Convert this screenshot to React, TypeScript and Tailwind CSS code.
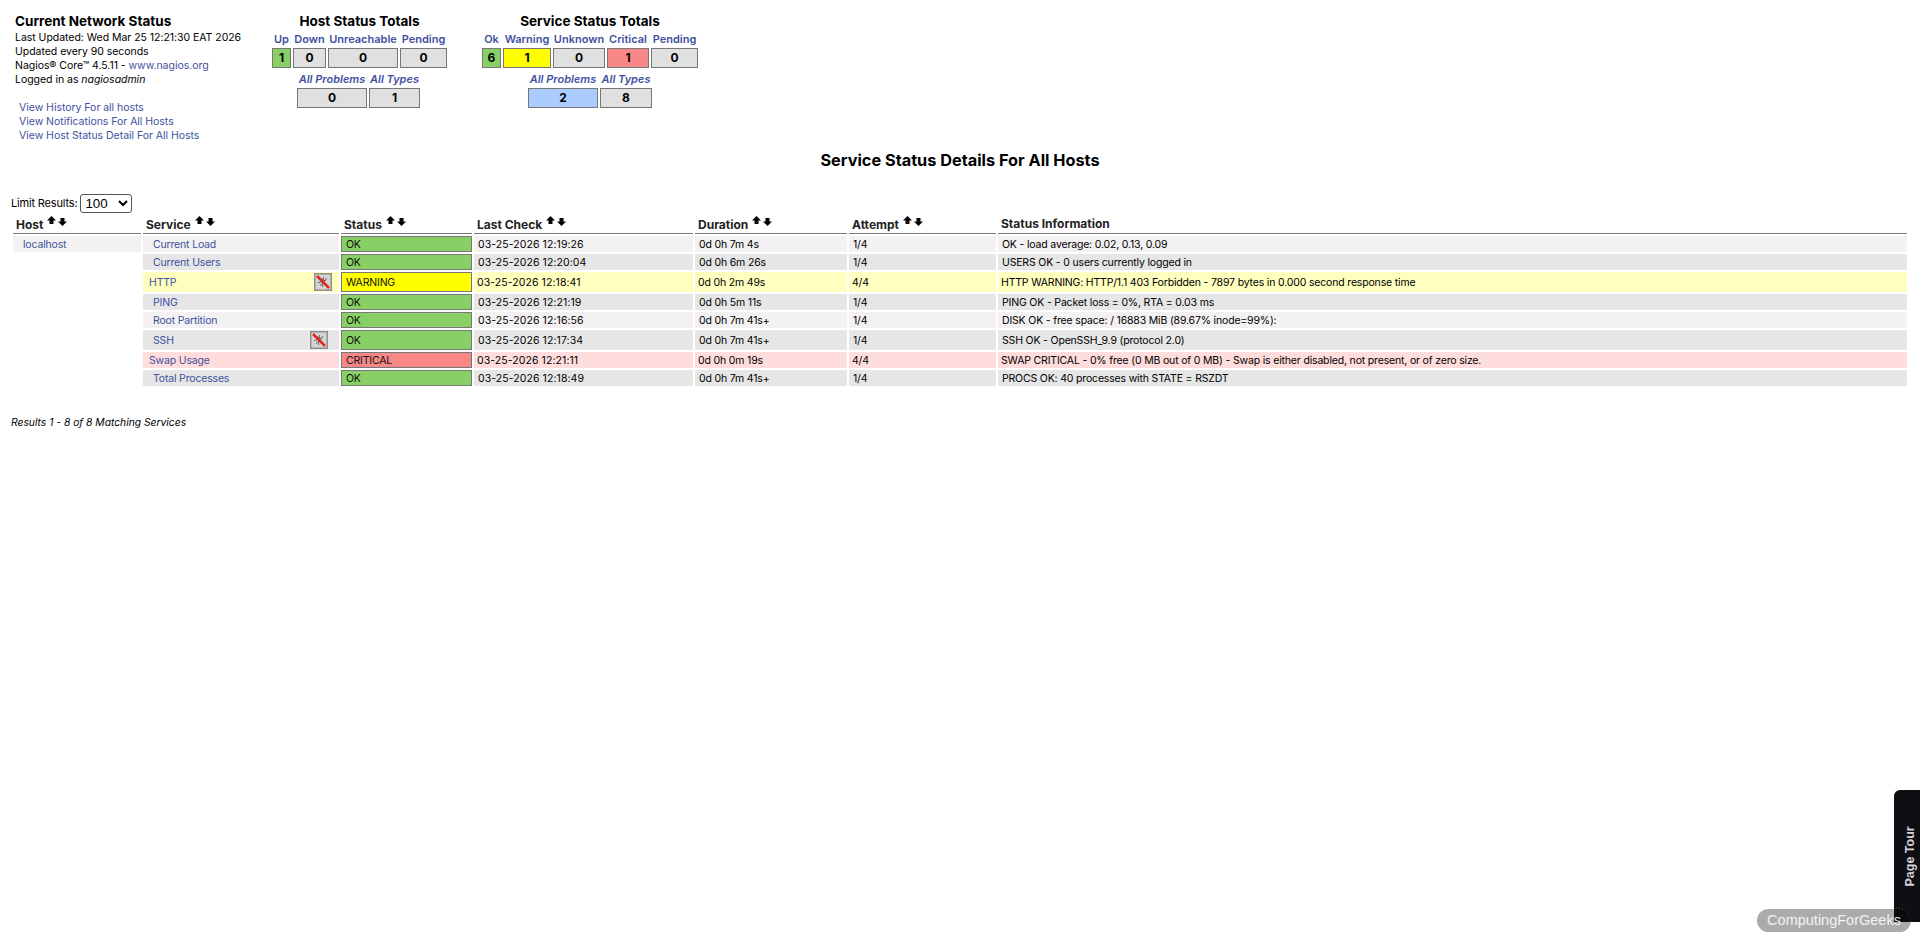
const link = "text-[#3f51a0]";

type Row = {
  service: string;
  status: "OK" | "WARNING" | "CRITICAL";
  check: string;
  duration: string;
  attempt: string;
  info: string;
  tall?: boolean;
  icon?: boolean;
  even?: boolean;
};

const rows: Row[] = [
  { service: "Current Load", status: "OK", check: "03-25-2026 12:19:26", duration: "0d 0h 7m 4s", attempt: "1/4", info: "OK - load average: 0.02, 0.13, 0.09" },
  { service: "Current Users", status: "OK", check: "03-25-2026 12:20:04", duration: "0d 0h 6m 26s", attempt: "1/4", info: "USERS OK - 0 users currently logged in", even: true },
  { service: "HTTP", status: "WARNING", check: "03-25-2026 12:18:41", duration: "0d 0h 2m 49s", attempt: "4/4", info: "HTTP WARNING: HTTP/1.1 403 Forbidden - 7897 bytes in 0.000 second response time", tall: true, icon: true },
  { service: "PING", status: "OK", check: "03-25-2026 12:21:19", duration: "0d 0h 5m 11s", attempt: "1/4", info: "PING OK - Packet loss = 0%, RTA = 0.03 ms", even: true },
  { service: "Root Partition", status: "OK", check: "03-25-2026 12:16:56", duration: "0d 0h 7m 41s+", attempt: "1/4", info: "DISK OK - free space: / 16883 MiB (89.67% inode=99%):" },
  { service: "SSH", status: "OK", check: "03-25-2026 12:17:34", duration: "0d 0h 7m 41s+", attempt: "1/4", info: "SSH OK - OpenSSH_9.9 (protocol 2.0)", tall: true, icon: true, even: true },
  { service: "Swap Usage", status: "CRITICAL", check: "03-25-2026 12:21:11", duration: "0d 0h 0m 19s", attempt: "4/4", info: "SWAP CRITICAL - 0% free (0 MB out of 0 MB) - Swap is either disabled, not present, or of zero size." },
  { service: "Total Processes", status: "OK", check: "03-25-2026 12:18:49", duration: "0d 0h 7m 41s+", attempt: "1/4", info: "PROCS OK: 40 processes with STATE = RSZDT", even: true },
];

function SortArrows() {
  return (
    <svg width="20" height="10" viewBox="0 0 20 10" className="ml-1 inline-block align-[3px]">
      <path d="M4.5 0 L9 4.5 H6.5 V8 H2.5 V4.5 H0 Z" fill="#000" />
      <path d="M15.5 10 L11 5.5 H13.5 V2 H17.5 V5.5 H20 Z" fill="#000" />
    </svg>
  );
}

function NoAction() {
  return (
    <svg width="18" height="18" viewBox="0 0 18 18" className="block">
      <rect x="0.75" y="0.75" width="16.5" height="16.5" fill="#d4d4d4" stroke="#8f8f8f" strokeWidth="1.5" />
      <path d="M9.5 4 L8.5 14 M5 5 L12 8 M13 5 L6 13 M4 10 L9 8 M10 11 L14 13" stroke="#666" strokeWidth="1" fill="none" />
      <path d="M3 3 L15 15" stroke="#e2261a" strokeWidth="2.5" fill="none" />
    </svg>
  );
}

function TotalBox({ value, width, bg = "bg-[#e0e0e0]" }: { value: string; width: string; bg?: string }) {
  return (
    <div className={`${width} ${bg} flex h-5 items-center justify-center border border-[#777] text-[12px] font-bold tracking-normal text-black`}>
      {value}
    </div>
  );
}

function TotalLabel({ text, width, italic }: { text: string; width: string; italic?: boolean }) {
  return (
    <div className={`${width} text-center text-[11px] leading-[14px] font-semibold tracking-normal whitespace-nowrap ${link} ${italic ? "italic" : ""}`}>
      {text}
    </div>
  );
}

function HostTotals() {
  return (
    <div className="ml-[28px] flex w-[175px] flex-col items-center">
      <div className="h-[18px] text-[13.5px] leading-[18px] font-bold tracking-normal text-black">Host Status Totals</div>
      <div className="mt-[2px] flex gap-[2px]">
        <TotalLabel text="Up" width="w-[19px]" />
        <TotalLabel text="Down" width="w-[33px]" />
        <TotalLabel text="Unreachable" width="w-[70px]" />
        <TotalLabel text="Pending" width="w-[47px]" />
      </div>
      <div className="mt-[2px] flex gap-[2px]">
        <TotalBox value="1" width="w-[19px]" bg="bg-[#88d066]" />
        <TotalBox value="0" width="w-[33px]" />
        <TotalBox value="0" width="w-[70px]" />
        <TotalBox value="0" width="w-[47px]" />
      </div>
      <div className="mt-[4px] mr-[2px] flex gap-[2px]">
        <TotalLabel text="All Problems" width="w-[70px]" italic />
        <TotalLabel text="All Types" width="w-[51px]" italic />
      </div>
      <div className="mt-[2px] mr-[2px] flex gap-[2px]">
        <TotalBox value="0" width="w-[70px]" />
        <TotalBox value="1" width="w-[51px]" />
      </div>
    </div>
  );
}

function ServiceTotals() {
  return (
    <div className="ml-[35px] flex w-[216px] flex-col items-center">
      <div className="h-[18px] text-[13.5px] leading-[18px] font-bold tracking-normal text-black">Service Status Totals</div>
      <div className="mt-[2px] flex gap-[2px]">
        <TotalLabel text="Ok" width="w-[19px]" />
        <TotalLabel text="Warning" width="w-[48px]" />
        <TotalLabel text="Unknown" width="w-[52px]" />
        <TotalLabel text="Critical" width="w-[42px]" />
        <TotalLabel text="Pending" width="w-[47px]" />
      </div>
      <div className="mt-[2px] flex gap-[2px]">
        <TotalBox value="6" width="w-[19px]" bg="bg-[#88d066]" />
        <TotalBox value="1" width="w-[48px]" bg="bg-[#ffff00]" />
        <TotalBox value="0" width="w-[52px]" />
        <TotalBox value="1" width="w-[42px]" bg="bg-[#f88888]" />
        <TotalBox value="0" width="w-[47px]" />
      </div>
      <div className="mt-[4px] flex gap-[2px]">
        <TotalLabel text="All Problems" width="w-[70px]" italic />
        <TotalLabel text="All Types" width="w-[52px]" italic />
      </div>
      <div className="mt-[2px] flex gap-[2px]">
        <TotalBox value="2" width="w-[70px]" bg="bg-[#aaccff]" />
        <TotalBox value="8" width="w-[52px]" />
      </div>
    </div>
  );
}

export default function App() {
  return (
    <div className="relative h-[941px] overflow-hidden bg-white font-['Inter',sans-serif] text-[10.5px] tracking-[-0.17px] text-black">
      <div className="flex pt-[12px] pl-[15px]">
        <div className="w-[229px] tracking-[-0.03px] whitespace-nowrap">
          <div className="h-[19px] text-[13.5px] leading-[18px] font-bold tracking-normal">Current Network Status</div>
          <div className="leading-[14px]">Last Updated: Wed Mar 25 12:21:30 EAT 2026</div>
          <div className="leading-[14px]">Updated every 90 seconds</div>
          <div className="leading-[14px]">
            Nagios® Core™ 4.5.11 - <span className={link}>www.nagios.org</span>
          </div>
          <div className="leading-[14px]">
            Logged in as <i>nagiosadmin</i>
          </div>
          <div className={`mt-[14px] ml-[4px] ${link}`}>
            <div className="leading-[14px]">View History For all hosts</div>
            <div className="leading-[14px]">View Notifications For All Hosts</div>
            <div className="leading-[14px]">View Host Status Detail For All Hosts</div>
          </div>
        </div>
        <HostTotals />
        <ServiceTotals />
      </div>

      <div className="mt-[7px] text-center text-[16.3px] leading-[20px] font-bold tracking-normal">Service Status Details For All Hosts</div>

      <div className="mt-[24px] flex h-[18px] items-center pl-[11px] text-[11px]">
        Limit Results:
        <select className="ml-[3px] h-[19px] w-[52px] rounded-[3px] border border-[#555] font-['Liberation_Sans',sans-serif] text-[13.33px] tracking-normal">
          <option>100</option>
        </select>
      </div>

      <table className="ml-[11px] w-[1898px] table-fixed border-separate border-spacing-[2px]">
        <colgroup>
          <col className="w-[128px]" />
          <col className="w-[196px]" />
          <col className="w-[131px]" />
          <col className="w-[219px]" />
          <col className="w-[152px]" />
          <col className="w-[147px]" />
          <col />
        </colgroup>
        <thead>
          <tr>
            {["Host", "Service", "Status", "Last Check", "Duration", "Attempt", "Status Information"].map((h) => (
              <th key={h} className="h-[20px] border-b border-[#777] px-[3px] text-left text-[12px] leading-[14px] font-bold tracking-normal whitespace-nowrap text-[#222]">
                {h}
                {h !== "Status Information" && <SortArrows />}
              </th>
            ))}
          </tr>
        </thead>
        <tbody>
          {rows.map((r, i) => {
            const bg = r.status === "WARNING" ? "bg-[#ffffc0]" : r.status === "CRITICAL" ? "bg-[#ffdddd]" : r.even ? "bg-[#e6e6e6]" : "bg-[#f3f1f2]";
            const statusBg = r.status === "OK" ? "bg-[#88d066]" : r.status === "WARNING" ? "bg-[#ffff00]" : "bg-[#f88888]";
            const inset = r.status === "OK" ? "pl-[4px]" : "pl-[3px]";
            return (
              <tr key={r.service} className={r.tall ? "h-[20px]" : "h-[16px]"}>
                {i === 0 ? (
                  <td className={`bg-[#f3f1f2] p-0 pt-px pl-[10px] leading-[14px] ${link}`}>localhost</td>
                ) : (
                  <td className="p-0" />
                )}
                <td className={`${bg} p-0 leading-[14px] ${r.icon ? "" : "pt-px"} ${r.status === "OK" ? "pl-[10px]" : "pl-[6px]"} ${link}`}>
                  <div className="flex items-center justify-between">
                    <span className={r.icon ? "pt-px" : ""}>{r.service}</span>
                    {r.icon && (
                      <span className={r.status === "OK" ? "mr-[11px]" : "mr-[7px]"}>
                        <NoAction />
                      </span>
                    )}
                  </div>
                </td>
                <td className={`${statusBg} border border-[#777] p-0 pt-px pl-[4px] leading-[13px] text-[#111]`}>{r.status}</td>
                <td className={`${bg} p-0 pt-px ${inset} leading-[14px] tracking-[0.08px]`}>{r.check}</td>
                <td className={`${bg} p-0 pt-px ${inset} leading-[14px]`}>{r.duration}</td>
                <td className={`${bg} p-0 pt-px ${inset} leading-[14px]`}>{r.attempt}</td>
                <td className={`${bg} p-0 pt-px ${inset} leading-[14px]`}>{r.info}</td>
              </tr>
            );
          })}
        </tbody>
      </table>

      <div className="mt-[27px] pl-[11px] text-[10.3px] leading-[14px] tracking-normal italic">Results 1 - 8 of 8 Matching Services</div>

      <div className="absolute top-[790px] right-0 flex h-[132px] w-[26px] items-center justify-center overflow-hidden rounded-tl-[6px] bg-[#0e0f12] pl-[6px]">
        <span className="-rotate-90 font-['Liberation_Sans',sans-serif] text-[12.5px] font-bold tracking-normal whitespace-nowrap text-[#d8d0d8]">Page Tour</span>
        <svg width="30" height="30" viewBox="0 0 30 30" className="absolute top-[116px] left-[-12px]">
          <circle cx="15" cy="15" r="13" fill="none" stroke="#6a6b72" strokeWidth="1" strokeDasharray="1 2" />
        </svg>
      </div>
      <div className="absolute top-[909px] right-[9px] flex h-[23px] w-[154px] items-center justify-center rounded-full bg-black/33 font-['Liberation_Sans',sans-serif] text-[14.5px] tracking-normal text-white/85">
        ComputingForGeeks
      </div>
    </div>
  );
}
